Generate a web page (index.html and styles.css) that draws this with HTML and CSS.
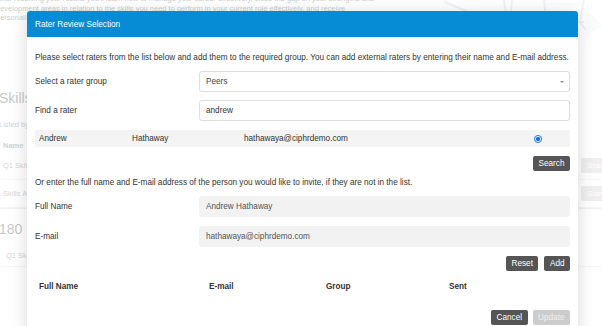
FILE: index.html
```html
<!DOCTYPE html>
<html lang="en">
<head>
    <meta charset="UTF-8">
    <meta name="viewport" content="width=device-width, initial-scale=1.0">
    <title>Rater Review Selection</title>
    <link rel="stylesheet" href="styles.css">
</head>
<body>
    <div class="page">
        <div class="hero">
            <p class="hero-text">
                After receiving your results you'll learn how to manage your career effectively, close the gap on your strengths and<br>
                development areas in relation to the skills you need to perform in your current role effectively, and receive<br>
                personalised recommendations for learning and development activities.
            </p>
            <svg class="hero-art" width="170" height="40" viewBox="0 0 170 40">
                <path d="M10 2 L60 22 L150 22" fill="none" stroke="#c9cfe0" stroke-width="2"/>
                <path d="M70 0 L72 14 M78 0 L77 12" fill="none" stroke="#c9cfe0" stroke-width="2"/>
                <path d="M110 -2 L112 22 M150 0 L146 22 L152 30" fill="none" stroke="#c9cfe0" stroke-width="2"/>
                <path d="M112 4 L146 4 M112 12 L146 12" fill="none" stroke="#e3e7f0" stroke-width="1"/>
                <path d="M152 10 L170 26 L152 34 Z" fill="#eef1f7"/>
            </svg>
        </div>

        <section class="card">
            <h2 class="card-title">Skills</h2>
            <p class="card-sub">Listed by due date</p>
            <div class="list-head">Name</div>
            <div class="list-row">
                <span>Q1 Skills Review</span>
                <span class="start-btn">Start</span>
            </div>
            <div class="list-row">
                <span>Skills Assessment</span>
                <span class="start-btn">Start</span>
            </div>
        </section>

        <section class="card card-second">
            <h2 class="card-title">180</h2>
            <div class="list-row short">
                <span>Q1 Skills 180</span>
            </div>
        </section>
    </div>

    <div class="backdrop"></div>

    <div class="modal">
        <div class="modal-header">Rater Review Selection</div>
        <div class="modal-body">
            <p class="intro">Please select raters from the list below and add them to the required group. You can add external raters by entering their name and E-mail address.</p>

            <div class="form-row first">
                <label>Select a rater group</label>
                <div class="field select">Peers<span class="caret"></span></div>
            </div>
            <div class="form-row">
                <label>Find a rater</label>
                <div class="field">andrew</div>
            </div>

            <div class="result-row">
                <span>Andrew</span>
                <span>Hathaway</span>
                <span>hathawaya@ciphrdemo.com</span>
                <span class="radio"></span>
            </div>

            <div class="actions">
                <button class="btn">Search</button>
            </div>

            <p class="intro second">Or enter the full name and E-mail address of the person you would like to invite, if they are not in the list.</p>

            <div class="form-row first">
                <label>Full Name</label>
                <div class="field filled">Andrew Hathaway</div>
            </div>
            <div class="form-row spaced">
                <label>E-mail</label>
                <div class="field filled">hathawaya@ciphrdemo.com</div>
            </div>

            <div class="actions">
                <button class="btn">Reset</button>
                <button class="btn">Add</button>
            </div>

            <div class="table-head">
                <span>Full Name</span>
                <span>E-mail</span>
                <span>Group</span>
                <span>Sent</span>
            </div>

            <div class="actions footer">
                <button class="btn">Cancel</button>
                <button class="btn disabled">Update</button>
            </div>
        </div>
    </div>
</body>
</html>
```

FILE: styles.css
```css
body {
    margin: 0;
    width: 602px;
    height: 326px;
    overflow: hidden;
    position: relative;
    font-family: "Liberation Sans", Arial, sans-serif;
    color: #333;
    background-color: white;
}

/* page behind the dialog */
.hero {
    display: flex;
    height: 89px;
}
.hero-text {
    margin: -6px 0 0 -4px;
    font-size: 7.5px;
    line-height: 9.5px;
    color: #444;
    white-space: nowrap;
}
.hero-art {
    margin-left: auto;
    margin-right: -2px;
}
.card {
    margin-left: -1px;
    border-bottom: 1px solid #ccc;
}
.card-title {
    margin: 0;
    font-size: 14px;
    line-height: 18px;
    font-weight: normal;
    color: #333;
}
.card-sub {
    margin: 13px 0 0;
    font-size: 7.5px;
    line-height: 9px;
    color: #555;
}
.list-head {
    margin-top: 11px;
    padding-left: 4px;
    font-size: 7.5px;
    font-weight: bold;
    color: #555;
    line-height: 12px;
}
.list-row {
    display: flex;
    align-items: center;
    justify-content: space-between;
    height: 27px;
    padding-left: 4px;
    font-size: 7.5px;
    color: #666;
    border-bottom: 1px solid #ddd;
}
.list-row.short {
    height: 22px;
    margin-top: 6px;
    padding-left: 7px;
}
.start-btn {
    background-color: #c4c4c4;
    color: white;
    padding: 3px 6px;
    margin-right: -8px;
    border-radius: 2px;
    font-size: 8px;
}
.card-second {
    margin-top: 11px;
    border-bottom: none;
}

.backdrop {
    position: absolute;
    inset: 0;
    background-color: rgba(255, 255, 255, 0.72);
}

/* dialog */
.modal {
    position: absolute;
    left: 27px;
    top: 11px;
    width: 551px;
    background-color: white;
    border-radius: 3px;
    box-shadow: 0 3px 18px rgba(0, 0, 0, 0.16);
}
.modal-header {
    height: 26px;
    display: flex;
    align-items: center;
    padding: 0 8px;
    background-color: #058cd4;
    color: white;
    font-size: 8.2px;
    border-radius: 3px 3px 0 0;
}
.modal-body {
    padding: 15px 8px 8px;
    font-size: 8.2px;
}
.intro {
    margin: 0;
    line-height: 12px;
}
.intro.second {
    margin-top: 6px;
}
.form-row {
    display: grid;
    grid-template-columns: 164px 1fr;
    align-items: center;
    height: 21px;
    margin-top: 8px;
}
.form-row.first {
    margin-top: 7px;
}
.form-row.spaced {
    margin-top: 9px;
}
.field {
    height: 21px;
    box-sizing: border-box;
    display: flex;
    align-items: center;
    padding: 0 6px;
    border: 1px solid #ddd;
    border-radius: 3px;
    color: #333;
}
.field.select {
    position: relative;
    color: #444;
}
.caret {
    position: absolute;
    right: 5px;
    top: 9px;
    border-left: 2px solid transparent;
    border-right: 2px solid transparent;
    border-top: 2px solid #888;
}
.field.filled {
    background-color: #f2f2f2;
    border-color: #f2f2f2;
    color: #555;
}
.result-row {
    display: grid;
    grid-template-columns: 93px 112px 1fr auto;
    align-items: center;
    height: 17px;
    margin-top: 9px;
    background-color: #f4f4f4;
}
.result-row span {
    padding-left: 4px;
}
.result-row .radio {
    padding: 0;
    margin-right: 28px;
    width: 6px;
    height: 6px;
    border-radius: 50%;
    border: 1px solid #1a6ff0;
    background: radial-gradient(circle, #1a6ff0 45%, white 55%);
}
.actions {
    display: flex;
    justify-content: flex-end;
    gap: 6px;
    margin-top: 9px;
}
.actions.footer {
    margin-top: 17px;
    gap: 5px;
}
.btn {
    height: 15px;
    padding: 0 5.5px;
    border: none;
    border-radius: 2px;
    background-color: #555;
    color: white;
    font-family: "Liberation Sans", Arial, sans-serif;
    font-size: 8.2px;
}
.btn.disabled {
    background-color: #ccc;
    color: #eee;
}
.table-head {
    display: grid;
    grid-template-columns: 170px 117px 123px 1fr;
    margin-top: 10px;
    line-height: 12px;
    font-weight: bold;
}
.table-head span {
    padding-left: 4px;
}
```
